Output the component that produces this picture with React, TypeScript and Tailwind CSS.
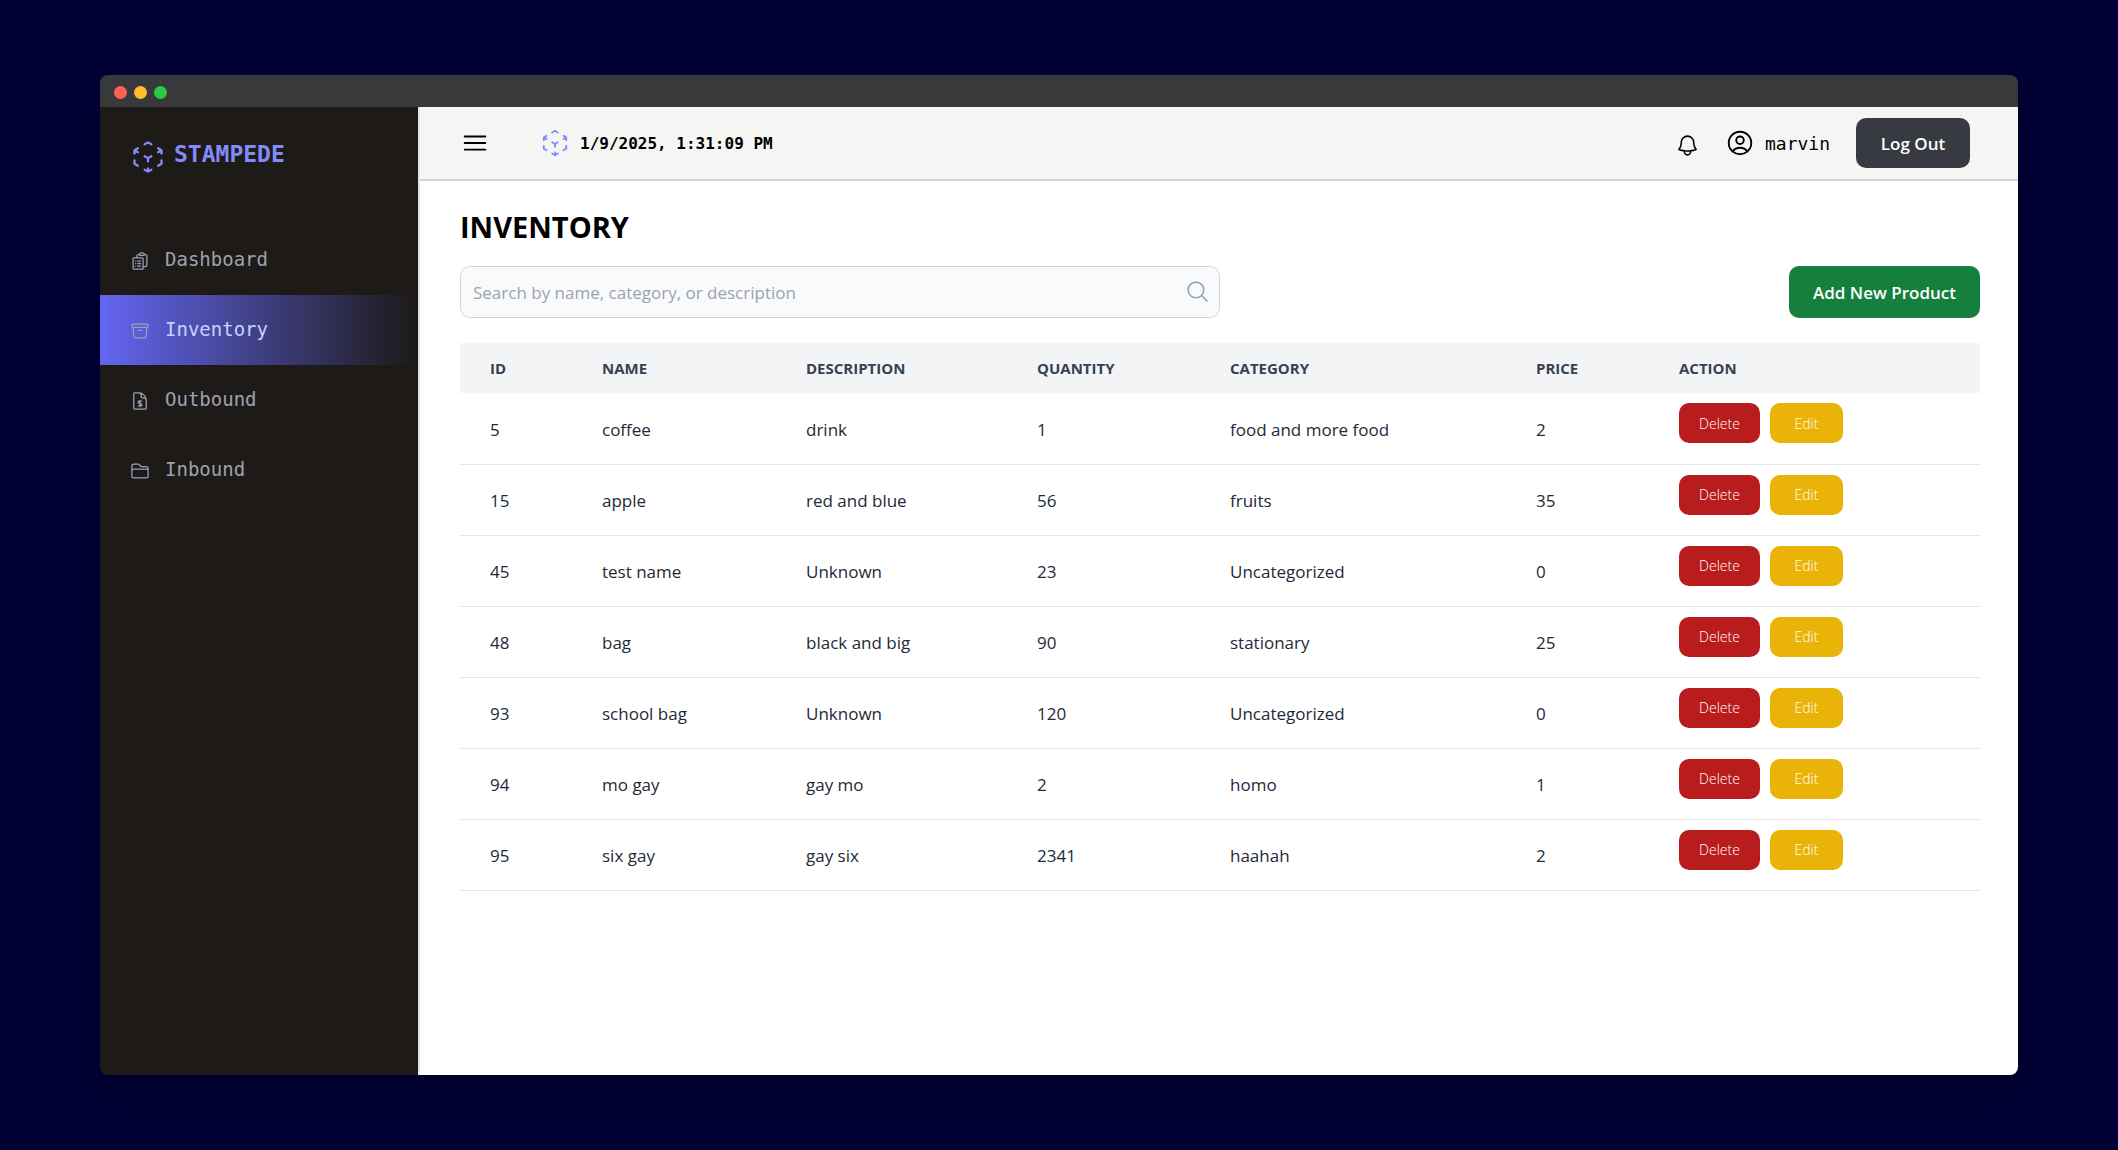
import type { ReactNode } from "react";
import {
  HiOutlineArchiveBox,
  HiOutlineBars3,
  HiOutlineBell,
  HiOutlineClipboardDocumentList,
  HiOutlineCubeTransparent,
  HiOutlineFolder,
  HiOutlineMagnifyingGlass,
  HiOutlineUserCircle,
} from "react-icons/hi2";

type Product = {
  id: number;
  name: string;
  description: string;
  quantity: number;
  category: string;
  price: number;
};

const products: Product[] = [
  { id: 5, name: "coffee", description: "drink", quantity: 1, category: "food and more food", price: 2 },
  { id: 15, name: "apple", description: "red and blue", quantity: 56, category: "fruits", price: 35 },
  { id: 45, name: "test name", description: "Unknown", quantity: 23, category: "Uncategorized", price: 0 },
  { id: 48, name: "bag", description: "black and big", quantity: 90, category: "stationary", price: 25 },
  { id: 93, name: "school bag", description: "Unknown", quantity: 120, category: "Uncategorized", price: 0 },
  { id: 94, name: "mo gay", description: "gay mo", quantity: 2, category: "homo", price: 1 },
  { id: 95, name: "six gay", description: "gay six", quantity: 2341, category: "haahah", price: 2 },
];

const columns = ["ID", "NAME", "DESCRIPTION", "QUANTITY", "CATEGORY", "PRICE", "ACTION"];

function DocumentDollarIcon() {
  return (
    <svg
      viewBox="0 0 24 24"
      className="size-5"
      fill="none"
      stroke="currentColor"
      strokeWidth="1.5"
      strokeLinecap="round"
      strokeLinejoin="round"
      aria-hidden="true"
    >
      <path d="M19.5 14.25v-2.625a3.375 3.375 0 0 0-3.375-3.375h-1.5A1.125 1.125 0 0 1 13.5 7.125v-1.5a3.375 3.375 0 0 0-3.375-3.375H8.25m3.75 9v7.5m2.25-6.466a9.016 9.016 0 0 0-3.461-.203c-.536.072-.974.478-1.021 1.017a4.559 4.559 0 0 0-.018.402c0 .464.336.844.775.994l2.95 1.012c.44.15.775.53.775.994 0 .136-.006.27-.018.402-.047.539-.485.945-1.021 1.017a9.077 9.077 0 0 1-3.461-.203M10.5 2.25H5.625c-.621 0-1.125.504-1.125 1.125v17.25c0 .621.504 1.125 1.125 1.125h12.75c.621 0 1.125-.504 1.125-1.125V11.25a9 9 0 0 0-9-9Z" />
    </svg>
  );
}

function NavItem({ icon, label, active = false }: { icon: ReactNode; label: string; active?: boolean }) {
  return (
    <a
      href="#"
      aria-current={active ? "page" : undefined}
      className={
        active
          ? "flex h-[70px] items-center gap-[15px] bg-linear-to-r/srgb from-[#6366f1] to-[#1c1917] pb-0.5 pl-[30px] text-[#c7d2fe]"
          : "flex h-[70px] items-center gap-[15px] pb-0.5 pl-[30px] text-[#9ca3af]"
      }
    >
      <span className="pt-1 text-[#94a3b8]">{icon}</span>
      <span className="font-['DejaVu_Sans_Mono',monospace] text-[19px]">{label}</span>
    </a>
  );
}

function Sidebar() {
  return (
    <aside className="w-[320px] shrink-0 border-r-2 border-[#e7e5e4] bg-[#1e1a17]">
      <div className="flex h-[118px] items-start gap-2 pt-8 pl-[30px] text-[#818cf8]">
        <HiOutlineCubeTransparent className="size-9" />
        <span className="font-['DejaVu_Sans_Mono',monospace] text-[23px] leading-[30px] font-bold">STAMPEDE</span>
      </div>
      <nav>
        <NavItem icon={<HiOutlineClipboardDocumentList className="size-5" />} label="Dashboard" />
        <NavItem icon={<HiOutlineArchiveBox className="size-5" />} label="Inventory" active />
        <NavItem icon={<DocumentDollarIcon />} label="Outbound" />
        <NavItem icon={<HiOutlineFolder className="size-5" />} label="Inbound" />
      </nav>
    </aside>
  );
}

function TopBar() {
  return (
    <header className="flex h-[74px] items-center border-b-2 border-[#d1d5db] bg-[#f5f5f3] pr-12 pl-10 text-black">
      <button type="button" aria-label="Toggle menu">
        <HiOutlineBars3 className="size-[30px]" />
      </button>
      <div className="ml-[50px] flex items-center gap-[10px]">
        <HiOutlineCubeTransparent className="size-[30px] text-[#818cf8]" />
        <time className="pt-0.5 font-['DejaVu_Sans_Mono',monospace] text-[16px] font-bold">1/9/2025, 1:31:09 PM</time>
      </div>
      <div className="ml-auto flex items-center">
        <button type="button" aria-label="Notifications" className="mr-[25px] pt-1">
          <HiOutlineBell className="size-[25px]" />
        </button>
        <HiOutlineUserCircle className="mr-[10px] size-[30px]" />
        <span className="mr-[26px] font-['DejaVu_Sans_Mono',monospace] text-[18px]">marvin</span>
        <button
          type="button"
          className="h-[50px] w-[114px] rounded-[10px] bg-[#383a42] pt-0.5 text-[17px] font-semibold text-white"
        >
          Log Out
        </button>
      </div>
    </header>
  );
}

function ProductTable() {
  return (
    <table className="mt-[25px] w-full table-fixed border-collapse text-left">
      <colgroup>
        <col className="w-[112px]" />
        <col className="w-[204px]" />
        <col className="w-[231px]" />
        <col className="w-[193px]" />
        <col className="w-[306px]" />
        <col className="w-[143px]" />
        <col />
      </colgroup>
      <thead>
        <tr className="h-[50px] bg-[#f3f4f6] text-[15px] text-[#374151]">
          {columns.map((column) => (
            <th key={column} scope="col" className="pl-[30px] font-bold">
              {column}
            </th>
          ))}
        </tr>
      </thead>
      <tbody>
        {products.map((product) => (
          <tr key={product.id} className="h-[71px] border-b border-[#e5e7eb] text-[17px] text-[#1f2937]">
            <td className="pt-0.5 pl-[30px]">{product.id}</td>
            <td className="pt-0.5 pl-[30px]">{product.name}</td>
            <td className="pt-0.5 pl-[30px]">{product.description}</td>
            <td className="pt-0.5 pl-[30px]">{product.quantity}</td>
            <td className="pt-0.5 pl-[30px]">{product.category}</td>
            <td className="pt-0.5 pl-[30px]">{product.price}</td>
            <td className="pl-[30px] align-top">
              <div className="flex gap-[10px] pt-[10px] text-[14px] font-light text-white">
                <button type="button" className="h-10 w-[81px] rounded-[10px] bg-[#b91c1c]">
                  Delete
                </button>
                <button type="button" className="h-10 w-[73px] rounded-[10px] bg-[#eab308]">
                  Edit
                </button>
              </div>
            </td>
          </tr>
        ))}
      </tbody>
    </table>
  );
}

export default function App() {
  return (
    <div className="flex min-h-screen flex-col bg-[#000035] px-[100px] py-[75px] font-['Open_Sans','Noto_Sans',sans-serif]">
      <div className="flex grow flex-col overflow-hidden rounded-lg shadow-[0_20px_40px_rgba(0,0,0,0.2)]">
        <div className="flex h-8 items-center gap-[7px] bg-[#38393a] pt-0.5 pl-[14px]">
          <span className="size-[13px] rounded-full bg-[#ff5f57]" />
          <span className="size-[13px] rounded-full bg-[#ffbd2e]" />
          <span className="size-[13px] rounded-full bg-[#28ca42]" />
        </div>
        <div className="flex grow">
          <Sidebar />
          <div className="min-w-0 grow bg-white">
            <TopBar />
            <main className="pt-[26px] pr-[38px] pl-10">
              <h1 className="text-[29px] leading-10 font-bold text-black">INVENTORY</h1>
              <div className="mt-[19px] flex items-center justify-between">
                <div className="relative w-1/2">
                  <input
                    type="text"
                    aria-label="Search products"
                    placeholder="Search by name, category, or description"
                    className="h-[52px] w-full rounded-[10px] border border-[#d1d5db] bg-[#f9fafb] pr-12 pl-3 text-[17px] placeholder:text-[#9ca3af]"
                  />
                  <HiOutlineMagnifyingGlass className="pointer-events-none absolute top-[13px] right-[10px] size-[25px] text-[#94a3b8]" />
                </div>
                <button
                  type="button"
                  className="h-[52px] w-[191px] rounded-[10px] bg-[#15803d] pt-0.5 text-[17px] font-semibold text-white"
                >
                  Add New Product
                </button>
              </div>
              <ProductTable />
            </main>
          </div>
        </div>
      </div>
    </div>
  );
}
